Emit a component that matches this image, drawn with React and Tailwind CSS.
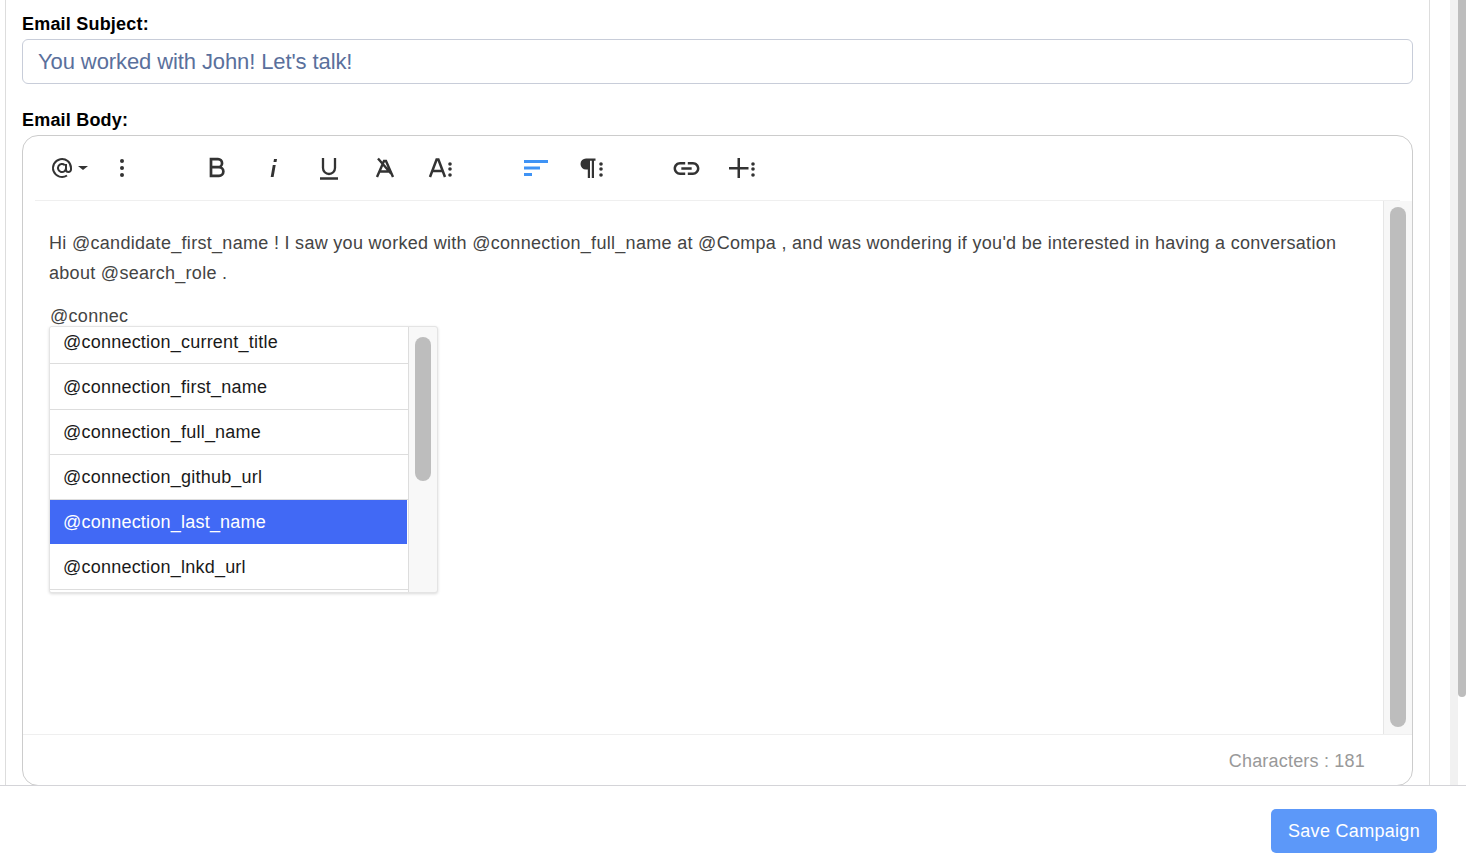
import { MdLink } from 'react-icons/md';

const opciones = [
  'connection_first_name',
  'connection_full_name',
  'connection_github_url',
  'connection_last_name',
  'connection_lnkd_url',
];

function Dots({ x = 21 }) {
  return (
    <>
      <circle cx={x} cy="8" r="1.8" />
      <circle cx={x} cy="13" r="1.8" />
      <circle cx={x} cy="19" r="1.8" />
    </>
  );
}

function Icon({ children, className = '', stroke = false }) {
  return (
    <svg
      viewBox="0 0 24 24"
      className={`w-6 h-6 overflow-visible ${className}`}
      fill={stroke ? 'none' : 'currentColor'}
      stroke={stroke ? 'currentColor' : 'none'}
    >
      {children}
    </svg>
  );
}

function Toolbar() {
  return (
    <div className="mx-3 h-[65px] border-b border-[#efefef] flex items-center text-[#333333] shrink-0">
      <div className="ml-[15px] w-[45px] flex items-center">
        <Icon stroke className="w-[24px] h-[24px]">
          <path strokeWidth="2" d="M16 12a4 4 0 1 1-1.2-2.8M16 8v5.5a2.5 2.5 0 0 0 5 0V12a9 9 0 1 0-4 7.5" />
        </Icon>
        <span className="ml-[4px] border-x-[5px] border-t-[4px] border-x-transparent border-t-[#333333]" />
      </div>
      <div className="ml-[15px] w-[24px]">
        <Icon>
          <circle cx="12" cy="5" r="2" />
          <circle cx="12" cy="12" r="2" />
          <circle cx="12" cy="19" r="2" />
        </Icon>
      </div>
      <div className="ml-[71px] flex items-center gap-[32px]">
        <Icon stroke>
          <path strokeWidth="2.7" d="M6 3.1h7a4.05 4.05 0 0 1 0 8.1H6zM6 11.2h8a4.35 4.35 0 0 1 0 8.7H6zM6 2v19" />
        </Icon>
        <Icon>
          <path d="M13 3h3l-.5 3h-3zM11.8 9h2.9l-2.100 12h-2.900z" />
        </Icon>
        <Icon stroke>
          <path strokeWidth="2.3" d="M6 2v10a6 6 0 0 0 12 0V2M3 22.500h18" />
        </Icon>
        <Icon stroke>
          <path strokeWidth="2.4" d="M4 21 11 5h2l7 16M7 15.500h10M5 2.500l13 15" />
        </Icon>
        <Icon>
          <path stroke="currentColor" strokeWidth="2.500" fill="none" d="M1 21 7.600 3.500h1.800L16 21M3.500 15h10" />
          <Dots x={21} />
        </Icon>
      </div>
      <div className="ml-[71px] flex items-center gap-[32px]">
        <Icon className="text-[#3f93f5]">
          <path d="M0 4h24v3H0zM0 10.500h16v3H0zM0 17h8v3H0z" />
        </Icon>
        <Icon>
          <path d="M6 2.500h9.500v2.200H14V22h-2.200V4.700h-1.800V22H7.800v-8.500H6a5.500 5.500 0 0 1 0-11z" />
          <Dots x={21} />
        </Icon>
      </div>
      <div className="ml-[70px] flex items-center gap-[32px]">
        <MdLink size={31} className="-mx-[3.5px]" />
        <Icon>
          <path d="M7.500 2h2.500v9h8.500v2.500H10V22H7.500v-8.500H-1V11h8.500z" />
          <Dots x={23} />
        </Icon>
      </div>
    </div>
  );
}

function MentionList() {
  return (
    <div className="absolute left-[26px] top-[125px] w-[389px] h-[267px] bg-[#f8f8f8] rounded-[3px] border border-[#e4e4e4] shadow-[0_1px_3px_rgba(0,0,0,0.15)] flex overflow-hidden text-[18px] text-[#1a1a1a] tracking-[0.22px]">
      <div className="w-[359px] border-r border-[#dddddd] bg-white shrink-0">
        <div className="h-[37px] border-b border-[#dddddd] pl-[13px] leading-[30px]">@connection_current_title</div>
        {opciones.map((o, i) => (
          <div
            key={o}
            className={`flex items-center pl-[13px] ${i === 0 || i === 4 ? 'h-[46px] pt-px' : i === 3 ? 'h-[44px]' : 'h-[45px]'} ${i === 3 ? 'bg-[#4169f5] text-white mr-px' : 'border-b border-[#dddddd]'}`}
          >
            @{o}
          </div>
        ))}
      </div>
      <div className="flex-1 pt-[10px] flex justify-center">
        <div className="w-[16px] h-[144px] rounded-full bg-[#bdbdbd]" />
      </div>
    </div>
  );
}

export default function App() {
  return (
    <div className="w-[1466px] h-[860px] bg-white flex flex-col overflow-hidden font-['Liberation_Sans',Arial,sans-serif]">
      <div className="h-[785px] flex shrink-0 overflow-hidden">
        <div className="ml-[5px] w-[1425px] border-x border-[#dddddd] pl-4 pr-4 shrink-0">
          <div className="pt-[14px] text-[18px] leading-[21px] font-bold text-black tracking-[0.2px]">Email Subject:</div>
          <div className="mt-1 h-[45px] border border-[#c8cdd9] rounded-[6px] flex items-center pl-[15px] text-[22px] text-[#5a709c] tracking-[-0.1px]">
            You worked with John! Let's talk!
          </div>
          <div className="mt-[26px] text-[18px] leading-[21px] font-bold text-black tracking-[0.2px]">Email Body:</div>
          <div className="mt-1 h-[651px] border border-[#cccccc] rounded-[16px] flex flex-col">
            <Toolbar />
            <div className="flex flex-1 min-h-0 relative">
              <div className="flex-1 pl-[26px] pr-[40px] pt-[27px] text-[18px] text-[#444444] tracking-[0.3px]">
                <p className="leading-[30px]">
                  Hi @candidate_first_name ! I saw you worked with @connection_full_name at @Compa , and was wondering if you'd be interested in having a conversation about @search_role .
                </p>
                <p className="mt-[13px] ml-px leading-[30px]">@connec</p>
              </div>
              <div className="w-[29px] bg-[#f7f7f7] border-l border-[#e6e6e6] pt-[6px] flex justify-center shrink-0">
                <div className="w-[16px] h-[520px] rounded-full bg-[#bdbdbd]" />
              </div>
              <MentionList />
            </div>
            <div className="h-[51px] border-t border-[#efefef] flex justify-end items-center pt-[2px] pr-[47px] text-[18px] text-[#999999] tracking-[0.2px] shrink-0">
              Characters : 181
            </div>
          </div>
        </div>
        <div className="ml-[20px] w-[8px] bg-[#f1f1f1] shrink-0" />
        <div className="w-[8px] h-[697px] bg-[#bdbdbd] rounded-b-full shrink-0" />
      </div>
      <div className="flex-1 border-t border-[#d4d4d8] flex justify-end items-start pt-[23px] pr-[29px]">
        <button className="w-[166px] h-11 rounded-[5px] bg-[#5c98f9] text-white text-[18px] tracking-[0.3px]">Save Campaign</button>
      </div>
    </div>
  );
}
